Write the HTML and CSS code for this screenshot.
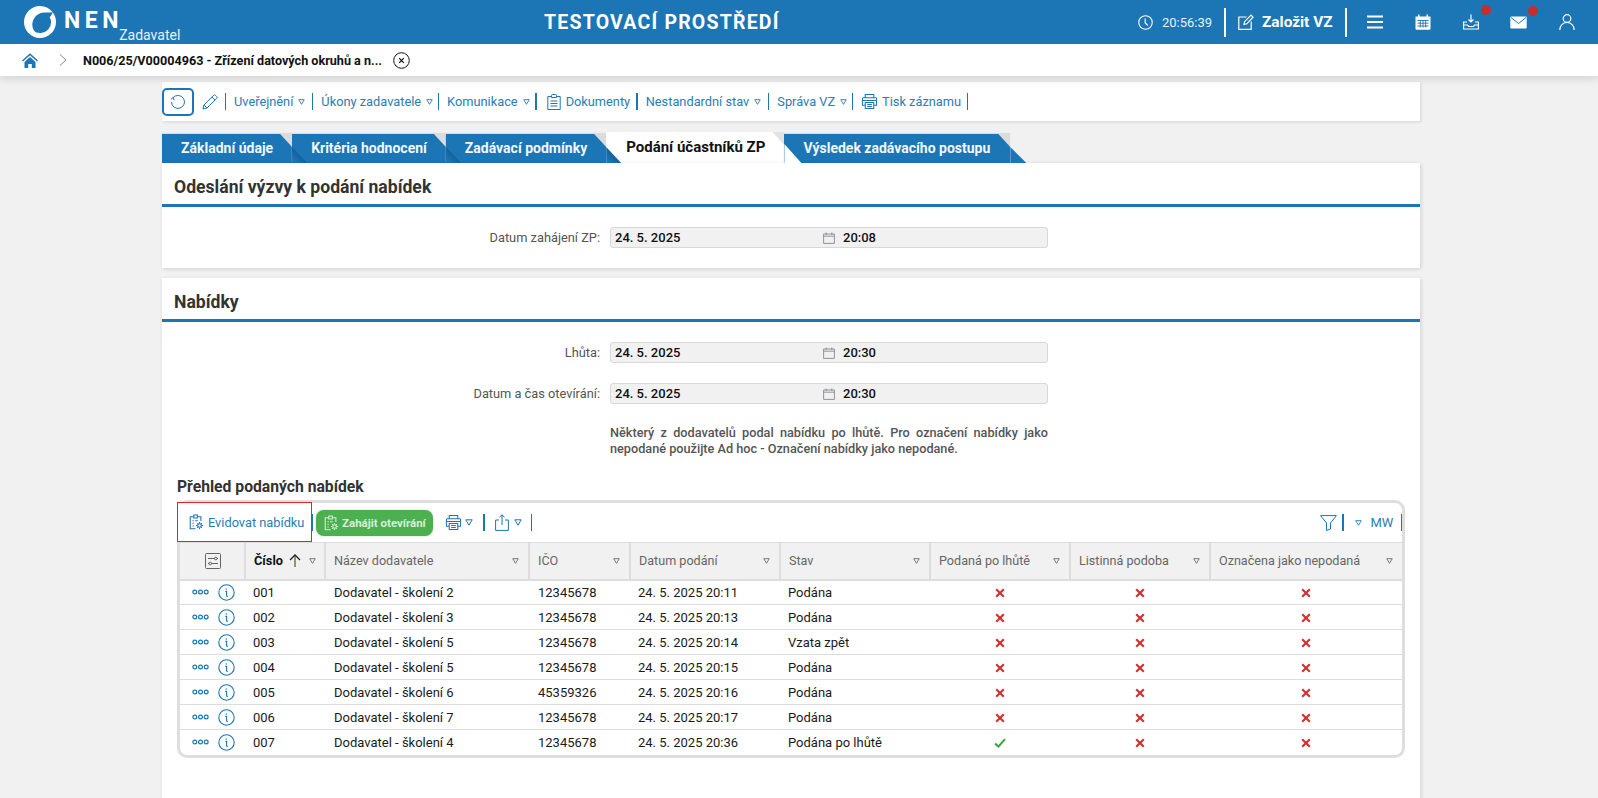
FILE: index.html
```html
<!DOCTYPE html>
<html lang="cs">
<head>
<meta charset="utf-8">
<title>NEN - Zadavatel</title>
<link rel="stylesheet" href="styles.css">
</head>
<body>
<svg class="defs" aria-hidden="true">
  <symbol id="tri" viewBox="0 0 8 7"><path d="M.8.8h6.4L4 6.2z" fill="none" stroke="currentColor" stroke-width="1"/></symbol>
  <symbol id="printer" viewBox="0 0 18 18" fill="none" stroke="currentColor" stroke-width="1.1"><path d="M4.5 5V1.5h9V5M4.5 13H1.5V6a1 1 0 0 1 1-1h13a1 1 0 0 1 1 1v7h-3"/><path d="M4.5 10h9v6.5h-9zM6.5 12.2h5M6.5 14.4h5M1.5 8h15"/></symbol>
  <symbol id="cal" viewBox="0 0 12 12" fill="none" stroke="currentColor" stroke-width=".9"><path d="M.6 2h10.8v9.4H.6zM.6 4.2h10.8M3.2.5v2.5M8.8.5v2.5"/></symbol>
  <symbol id="dots" viewBox="0 0 17 6" fill="none" stroke="currentColor" stroke-width="1.2"><circle cx="2.8" cy="3" r="1.9"/><circle cx="8.5" cy="3" r="1.9"/><circle cx="14.2" cy="3" r="1.9"/></symbol>
  <symbol id="info" viewBox="0 0 17 17" fill="none" stroke="currentColor" stroke-width="1.1"><circle cx="8.5" cy="8.5" r="7.7"/><path d="M7.3 7.4h1.3v4.2q0 .9 1.2.7" /><path d="M8.3 4.6v.9" stroke-width="1.4"/></symbol>
  <symbol id="cross" viewBox="0 0 10 10"><path d="M1.2 1.2l7.6 7.6M8.8 1.2L1.2 8.8" fill="none" stroke="currentColor" stroke-width="2.1"/></symbol>
  <symbol id="check" viewBox="0 0 12 10"><path d="M1 5.4l3.4 3.2L11 1.2" fill="none" stroke="currentColor" stroke-width="2"/></symbol>
  <symbol id="bid" viewBox="0 0 18 18" fill="none" stroke="currentColor" stroke-width="1.2"><path d="M6.5 3H2.5v13.5h6M11 3h3.5v5"/><path d="M6.5 1.2h4V4.5h-4zM5 7.5h1.5M8 7.5h3M5 10.5h1.5M5 13.5h1.5"/><circle cx="13" cy="13" r="2"/><path d="M13 9v1.6M13 15.4V17M9 13h1.6M15.4 13H17M10.3 10.3l1.1 1.1M14.6 14.6l1.1 1.1M15.7 10.3l-1.1 1.1M11.4 14.6l-1.1 1.1"/></symbol>
</svg>

<header class="topbar">
  <div class="brand">
    <svg class="logo" viewBox="0 0 32 32"><path d="M16 0a16 16 0 1 0 16 16c0-3.800-1.300-7.200-3.500-10-.4 2.400-1.400 3.800-3 5.300 1 1.400 1.600 3 1.600 4.700A11.100 11.100 0 1 1 13 5.300C8.500 6.600 5.500 10 4.500 14.500 3 21.500 8 29.300 16 28.200 10 26.800 7.300 21.500 8.700 15.800 10 10.500 14.700 6.700 20 6.500c3-.1 5.800.5 8.500-.5A16 16 0 0 0 16 0z" fill="#fff"/></svg>
    <span class="brand-name">NEN</span>
    <span class="brand-role">Zadavatel</span>
  </div>
  <div class="env-title">TESTOVACÍ PROSTŘEDÍ</div>
  <div class="top-actions">
    <svg class="ico15 clock" viewBox="0 0 16 16" fill="none" stroke="#fff" stroke-width="1.2"><circle cx="8" cy="8" r="7.200"/><path d="M7.600 3.800v4.400l2.800 3"/></svg>
    <span class="clock-time">20:56:39</span>
    <span class="top-sep first"></span>
    <svg class="ico16 edit" viewBox="0 0 16 16" fill="none" stroke="#fff" stroke-width="1.2"><path d="M8.500 3H.8v12.300h12.400V7.500"/><path d="M6 10.500l.6-2.800L13 1.200l2 2L8.800 9.800z"/></svg>
    <span class="create">Založit VZ</span>
    <span class="top-sep"></span>
    <svg class="ico16 menu" viewBox="0 0 16 14" fill="none" stroke="#fff" stroke-width="1.800"><path d="M0 1.500h16M0 7h16M0 12.500h16"/></svg>
    <svg class="ico16 calendar" viewBox="0 0 16 16"><path d="M.5 2.500h15V15a.8.8 0 0 1-.8.8H1.300a.8.800 0 0 1-.8-.8zM3 .5h1.500v3H3zM11.500.5H13v3h-1.500z" fill="#fff"/><path d="M2.500 6.500h11M2.500 9.200h11M2.500 12h11M5.300 6v7.500M8 6v7.500M10.700 6v7.500" stroke="#1c75b4" fill="none" stroke-width=".9"/></svg>
    <span class="with-badge download">
      <svg class="ico16" viewBox="0 0 16 16" fill="none" stroke="#fff" stroke-width="1.200"><path d="M8 .5v7M5.500 5.500L8 8l2.500-2.500"/><path d="M4 8H.6v7h14.800V8H12M.6 11h4l1 1.500h5l1-1.500h3.800" /></svg>
      <span class="badge"></span>
    </span>
    <span class="with-badge mail">
      <svg class="ico17" viewBox="0 0 17 13"><rect x=".3" y=".5" width="16.400" height="12" rx="1.200" fill="#fff"/><path d="M1 1.500l7.500 6 7.500-6" fill="none" stroke="#1c75b4" stroke-width="1"/></svg>
      <span class="badge"></span>
    </span>
    <svg class="ico16 user" viewBox="0 0 16 16" fill="none" stroke="#fff" stroke-width="1.200"><circle cx="8" cy="4.500" r="3.800"/><path d="M.8 16c0-4.500 3-7.500 7.200-7.500s7.200 3 7.200 7.500"/></svg>
  </div>
</header>

<nav class="crumbs">
  <svg class="home" viewBox="0 0 16 15"><path d="M8 .2L0 7.500l1 1L8 2.300l7 6.200 1-1z" fill="#1c75b4"/><path d="M2.500 9L8 4l5.500 5v6H9.800v-4H6.200v4H2.500z" fill="#1c75b4"/></svg>
  <svg class="chev" viewBox="0 0 8 12"><path d="M1 .5L7 6l-6 5.500" fill="none" stroke="#777" stroke-width=".9"/></svg>
  <span class="crumb-text">N006/25/V00004963 - Zřízení datových okruhů a n...</span>
  <svg class="crumb-close" viewBox="0 0 17 17" fill="none" stroke="#111"><circle cx="8.500" cy="8.500" r="7.800" stroke-width="1"/><path d="M6.200 6.200l4.600 4.600M10.800 6.200l-4.600 4.600" stroke-width="1.200"/></svg>
</nav>

<main class="page">
  <div class="toolbar">
    <button class="refresh" type="button"><svg viewBox="0 0 16 16" fill="none" stroke="#1c75b4" stroke-width="1"><path d="M3 3.800A6.500 6.500 0 1 1 1.500 8"/><path d="M.8 5.500L3 3.600l1.200 2.600" /></svg></button>
    <svg class="pencil" viewBox="0 0 16 16" fill="none" stroke="#1c75b4" stroke-width="1"><path d="M1 15l.9-4L11.500 1.400a1.500 1.500 0 0 1 2.100 0l1 1a1.500 1.500 0 0 1 0 2.100L5 14z"/><path d="M2 11l3 3M10 3l3 3"/></svg>
    <span class="tb-sep"></span>
    <a class="tb-item">Uveřejnění <svg class="tri"><use href="#tri"/></svg></a><span class="tb-sep"></span>
    <a class="tb-item tight-2">Úkony zadavatele <svg class="tri"><use href="#tri"/></svg></a><span class="tb-sep"></span>
    <a class="tb-item tight-1">Komunikace <svg class="tri"><use href="#tri"/></svg></a><span class="tb-sep"></span>
    <a class="tb-item tight-2 tb-doc"><svg class="doc-ico" viewBox="0 0 14 16" fill="none" stroke="#1c75b4" stroke-width="1"><path d="M4.500 2.500H.8v13h12.400v-13H9.500"/><path d="M4.500 1.500q0-1 1-1h3q1 0 1 1v2h-5zM3.500 7h7M3.500 9.500h7M3.500 12h7"/></svg>Dokumenty</a><span class="tb-sep"></span>
    <a class="tb-item">Nestandardní stav <svg class="tri"><use href="#tri"/></svg></a><span class="tb-sep"></span>
    <a class="tb-item tight-2">Správa VZ <svg class="tri"><use href="#tri"/></svg></a><span class="tb-sep"></span>
    <a class="tb-item tight-1"><svg class="print-ico"><use href="#printer"/></svg>Tisk záznamu</a><span class="tb-sep"></span>
  </div>

  <div class="tabs">
    <div class="tab">Základní údaje</div>
    <div class="tab">Kritéria hodnocení</div>
    <div class="tab">Zadávací podmínky</div>
    <div class="tab active">Podání účastníků ZP</div>
    <div class="tab last">Výsledek zadávacího postupu</div>
  </div>

  <section class="panel panel-first">
    <h2 class="panel-title">Odeslání výzvy k podání nabídek</h2>
    <div class="field first-field">
      <label class="field-label">Datum zahájení ZP:</label>
      <div class="dt"><span class="dt-date">24. 5. 2025</span><svg class="cal"><use href="#cal"/></svg><span>20:08</span></div>
    </div>
  </section>

  <section class="panel panel-second">
    <h2 class="panel-title">Nabídky</h2>
    <div class="field first-field">
      <label class="field-label">Lhůta:</label>
      <div class="dt"><span class="dt-date">24. 5. 2025</span><svg class="cal"><use href="#cal"/></svg><span>20:30</span></div>
    </div>
    <div class="field second-field">
      <label class="field-label">Datum a čas otevírání:</label>
      <div class="dt"><span class="dt-date">24. 5. 2025</span><svg class="cal"><use href="#cal"/></svg><span>20:30</span></div>
    </div>
    <p class="note">Některý z dodavatelů podal nabídku po lhůtě. Pro označení nabídky jako nepodané použijte Ad hoc - Označení nabídky jako nepodané.</p>
    <h3 class="overview">Přehled podaných nabídek</h3>

    <div class="grid-box">
      <div class="grid-tools">
        <div class="evid">
          <svg class="bid-ico"><use href="#bid"/></svg>
          <span class="evid-text">Evidovat nabídku</span>
          <span class="gt-sep evid-sep"></span>
        </div>
        <button class="open-btn" type="button"><svg class="bid-ico small"><use href="#bid"/></svg>Zahájit otevírání</button>
        <svg class="print-ico gt-print"><use href="#printer"/></svg>
        <svg class="tri gt-tri"><use href="#tri"/></svg>
        <span class="gt-sep s2"></span>
        <svg class="share" viewBox="0 0 14 17" fill="none" stroke="#1c75b4" stroke-width="1"><path d="M4 6H.6v10.400h12.800V6H10M7 11V.8M4.500 3.200L7 .8l2.500 2.400"/></svg>
        <svg class="tri share-tri"><use href="#tri"/></svg>
        <span class="gt-sep s3"></span>
        <span class="spacer"></span>
        <svg class="funnel" viewBox="0 0 17 16" fill="none" stroke="#1c75b4" stroke-width="1"><path d="M.6.600h15.800L10.500 8v6l-4 1.500V8z"/></svg>
        <span class="gt-sep s4"></span>
        <svg class="tri mw-tri"><use href="#tri"/></svg>
        <span class="mw">MW</span>
        <span class="gt-sep s5"></span>
      </div>
      <table class="grid">
        <colgroup><col class="c1"><col class="c2"><col class="c3"><col class="c4"><col class="c5"><col class="c6"><col class="c7"><col class="c8"><col class="c9"></colgroup>
        <thead>
          <tr>
            <th class="settings"><svg viewBox="0 0 16 16" fill="none" stroke="#555" stroke-width=".9"><rect x=".5" y=".5" width="15" height="15" rx="1"/><path d="M3 5.500h6.500M12 5.500h1M3 10.500h1M6.500 10.500H13"/><circle cx="10.800" cy="5.500" r="1.300"/><circle cx="5.200" cy="10.500" r="1.300"/></svg></th>
            <th class="sorted"><div class="th"><b>Číslo</b><svg class="arrow" viewBox="0 0 12 13" fill="none" stroke-width="1.300"><path d="M6 13V1" stroke="#7a5a20"/><path d="M1 6l5-5 5 5" stroke="#222"/></svg><svg class="tri th-tri"><use href="#tri"/></svg></div></th>
            <th><div class="th"><span>Název dodavatele</span><svg class="tri th-tri end"><use href="#tri"/></svg></div></th>
            <th><div class="th"><span>IČO</span><svg class="tri th-tri end"><use href="#tri"/></svg></div></th>
            <th><div class="th"><span>Datum podání</span><svg class="tri th-tri end"><use href="#tri"/></svg></div></th>
            <th><div class="th"><span>Stav</span><svg class="tri th-tri end"><use href="#tri"/></svg></div></th>
            <th><div class="th"><span>Podaná po lhůtě</span><svg class="tri th-tri end"><use href="#tri"/></svg></div></th>
            <th><div class="th"><span>Listinná podoba</span><svg class="tri th-tri end"><use href="#tri"/></svg></div></th>
            <th><div class="th"><span>Označena jako nepodaná</span><svg class="tri th-tri end"><use href="#tri"/></svg></div></th>
          </tr>
        </thead>
        <tbody>
          <tr><td class="act"><svg class="dots"><use href="#dots"/></svg><svg class="info"><use href="#info"/></svg></td><td>001</td><td>Dodavatel - školení 2</td><td>12345678</td><td>24. 5. 2025 20:11</td><td>Podána</td><td class="mark"><svg class="no"><use href="#cross"/></svg></td><td class="mark"><svg class="no"><use href="#cross"/></svg></td><td class="mark"><svg class="no"><use href="#cross"/></svg></td></tr>
          <tr><td class="act"><svg class="dots"><use href="#dots"/></svg><svg class="info"><use href="#info"/></svg></td><td>002</td><td>Dodavatel - školení 3</td><td>12345678</td><td>24. 5. 2025 20:13</td><td>Podána</td><td class="mark"><svg class="no"><use href="#cross"/></svg></td><td class="mark"><svg class="no"><use href="#cross"/></svg></td><td class="mark"><svg class="no"><use href="#cross"/></svg></td></tr>
          <tr><td class="act"><svg class="dots"><use href="#dots"/></svg><svg class="info"><use href="#info"/></svg></td><td>003</td><td>Dodavatel - školení 5</td><td>12345678</td><td>24. 5. 2025 20:14</td><td>Vzata zpět</td><td class="mark"><svg class="no"><use href="#cross"/></svg></td><td class="mark"><svg class="no"><use href="#cross"/></svg></td><td class="mark"><svg class="no"><use href="#cross"/></svg></td></tr>
          <tr><td class="act"><svg class="dots"><use href="#dots"/></svg><svg class="info"><use href="#info"/></svg></td><td>004</td><td>Dodavatel - školení 5</td><td>12345678</td><td>24. 5. 2025 20:15</td><td>Podána</td><td class="mark"><svg class="no"><use href="#cross"/></svg></td><td class="mark"><svg class="no"><use href="#cross"/></svg></td><td class="mark"><svg class="no"><use href="#cross"/></svg></td></tr>
          <tr><td class="act"><svg class="dots"><use href="#dots"/></svg><svg class="info"><use href="#info"/></svg></td><td>005</td><td>Dodavatel - školení 6</td><td>45359326</td><td>24. 5. 2025 20:16</td><td>Podána</td><td class="mark"><svg class="no"><use href="#cross"/></svg></td><td class="mark"><svg class="no"><use href="#cross"/></svg></td><td class="mark"><svg class="no"><use href="#cross"/></svg></td></tr>
          <tr><td class="act"><svg class="dots"><use href="#dots"/></svg><svg class="info"><use href="#info"/></svg></td><td>006</td><td>Dodavatel - školení 7</td><td>12345678</td><td>24. 5. 2025 20:17</td><td>Podána</td><td class="mark"><svg class="no"><use href="#cross"/></svg></td><td class="mark"><svg class="no"><use href="#cross"/></svg></td><td class="mark"><svg class="no"><use href="#cross"/></svg></td></tr>
          <tr><td class="act"><svg class="dots"><use href="#dots"/></svg><svg class="info"><use href="#info"/></svg></td><td>007</td><td>Dodavatel - školení 4</td><td>12345678</td><td>24. 5. 2025 20:36</td><td>Podána po lhůtě</td><td class="mark"><svg class="yes"><use href="#check"/></svg></td><td class="mark"><svg class="no"><use href="#cross"/></svg></td><td class="mark"><svg class="no"><use href="#cross"/></svg></td></tr>
        </tbody>
      </table>
    </div>
  </section>
</main>
</body>
</html>
```

FILE: styles.css
```css
* { box-sizing: border-box; }
html, body { margin: 0; height: 798px; overflow: hidden; }
body { background: #f1f1f1; font-family: Roboto, "Liberation Sans", sans-serif; font-size: 12.8px; color: #111; }
.defs { display: none; }
svg { display: block; flex: none; }

/* top bar */
.topbar { height: 44px; background: #1c75b4; color: #fff; display: flex; align-items: center; position: relative; z-index: 3; }
.brand { display: flex; align-items: flex-start; width: 544px; height: 44px; padding-left: 24px; flex: none; }
.logo { width: 32px; height: 32px; margin-top: 6px; }
.brand-name { font-size: 23px; font-weight: 700; letter-spacing: 4.6px; line-height: 26px; margin: 8px 0 0 8px; }
.brand-role { font-size: 14px; line-height: 16px; margin: 27px 0 0 -4px; color: #e8f1f8; }
.env-title { font-size: 19.5px; font-weight: 700; letter-spacing: 1.2px; width: 594px; flex: none; white-space: nowrap; }
.top-actions { display: flex; align-items: center; height: 44px; }
.ico15 { width: 15px; height: 15px; }
.ico16 { width: 16px; height: 16px; }
.ico17 { width: 17px; height: 13px; }
.clock-time { margin-left: 9px; color: #e8f1f8; width: 50px; font-size: 13px; }
.top-sep { width: 2px; height: 29px; background: #fff; margin-left: 11px; }
.top-sep.first { margin-left: 12px; }
.edit { margin-left: 12px; }
.create { margin-left: 8px; font-size: 15.4px; font-weight: 700; width: 72px; white-space: nowrap; }
.menu { margin-left: 20px; height: 14px; }
.calendar { margin-left: 32px; }
.with-badge { position: relative; display: block; }
.download { margin-left: 32px; }
.mail { margin-left: 31px; }
.badge { position: absolute; top: -9.5px; left: 18px; width: 10px; height: 10px; border-radius: 50%; background: #c62d2d; }
.user { margin-left: 32px; }

/* breadcrumb */
.crumbs { height: 32px; background: #fff; display: flex; align-items: center; box-shadow: 0 3px 8px rgba(0,0,0,.13); position: relative; z-index: 2; padding-left: 22px; }
.home { width: 16px; height: 15px; }
.chev { width: 8px; height: 12px; margin-left: 21px; }
.crumb-text { font-weight: 700; font-size: 12.6px; margin-left: 16px; width: 310px; white-space: nowrap; }
.crumb-close { width: 17px; height: 17px; }

/* page */
.page { margin: 6px 178px 0 162px; }
.toolbar { height: 39px; background: #fff; display: flex; align-items: center; box-shadow: 1px 1px 3px rgba(0,0,0,.12); }
.refresh { width: 32px; height: 28px; border: 2px solid #1c75b4; border-radius: 5px; background: #fff; padding: 0; display: flex; align-items: center; justify-content: center; }
.refresh svg { width: 16px; height: 16px; }
.pencil { width: 16px; height: 16px; margin-left: 8px; }
.tb-sep { width: 1.5px; height: 17px; background: #1c75b4; margin-left: 6.5px; flex: none; }
.tb-item { color: #2a7db8; margin-left: 8px; display: flex; align-items: center; white-space: nowrap; }
.tight-1 { margin-right: -1px; }
.tight-2 { margin-right: -2px; }
.tb-doc { margin-right: -.5px; }
.tri { width: 7px; height: 6px; color: #1c75b4; margin-left: 5px; }
.tb-item .tri { margin-left: 5px; }
.doc-ico { width: 14px; height: 16px; margin: 0 5px 0 2px; }
.print-ico { width: 17px; height: 17px; color: #1c75b4; margin-right: 4px; }

/* tabs */
.tabs { display: flex; align-items: flex-end; height: 31px; margin-top: 11px; }
.tab { height: 29px; background: #1c75b4; color: #f2f7fb; font-weight: 700; font-size: 14px; line-height: 29px; padding: 0 19px; position: relative; white-space: nowrap; box-shadow: 0 -1px 1px #dcdcdc; }
.tab::before { content: ""; position: absolute; top: 0; right: 0; width: 12px; height: 13px; background: #dcdcdc; clip-path: polygon(0 0, 100% 0, 100% 100%); }
.tab::after { content: ""; position: absolute; bottom: 0; left: 100%; width: 15px; height: 16px; background: linear-gradient(to bottom left, #15609a 50%, #1c75b4 85%); clip-path: polygon(0 0, 100% 100%, 0 100%); z-index: 1; }
.tab.active { height: 31px; background: #fff; color: #111; font-size: 15px; line-height: 31px; padding: 0 19px 0 20px; box-shadow: none; }
.tab.active::before { background: #e2e2e2; }
.tab.active::after { width: 17px; height: 19px; background: #fff; }
.tab.last { padding-right: 20px; }
.tab.last::after { background: #1c75b4; width: 16px; }

/* panels */
.panel { background: #fff; box-shadow: 1px 1px 4px rgba(0,0,0,.14); }
.panel-first { height: 105px; position: relative; }
.panel-second { margin-top: 10px; height: 530px; }
.panel-title { margin: 0; height: 44px; border-bottom: 3px solid #1c75b4; font-size: 17.6px; font-weight: 700; color: #333; padding: 0 0 0 12px; line-height: 49px; }
.field { display: flex; align-items: center; height: 21px; }
.first-field { margin-top: 20px; }
.second-field { margin-top: 20px; }
.field-label { width: 438px; text-align: right; color: #555; flex: none; }
.dt { margin-left: 10px; width: 438px; height: 21px; background: #f1f1f1; border: 1px solid #d8d8d8; border-radius: 3px; display: flex; align-items: center; padding-left: 4px; font-weight: 500; font-size: 13px; color: #111; }
.dt-date { width: 208px; }
.cal { width: 12px; height: 12px; color: #8c8494; margin-right: 8px; }
.note { margin: 21px 0 0 448px; width: 438px; font-size: 12.7px; line-height: 16px; font-weight: 500; color: #555; text-align: justify; }
.overview { margin: 20px 0 0 15px; font-size: 15.7px; font-weight: 700; color: #333; line-height: 20px; }

/* grid */
.grid-box { margin: 3px 0 0 15px; width: 1228px; height: 258px; border: 3px solid #dedede; border-radius: 10px; }
.grid-tools { height: 39px; display: flex; align-items: center; }
.evid { display: flex; align-items: center; width: 135px; height: 40px; margin: -1px 0 0 -3px; border: 1px solid #e3242b; color: #2a7db8; flex: none; padding-left: 10px; background: #fff; }
.evid-text { white-space: nowrap; }
.bid-ico { width: 16px; height: 16px; color: #1c75b4; margin-right: 4px; }
.gt-sep { width: 1.5px; height: 17px; background: #1c75b4; flex: none; }
.evid-sep { margin-left: 7px; }
.open-btn { margin-left: 4px; width: 117px; height: 26px; background: #4caf50; border: 0; border-radius: 8px; color: #d8efd9; font: 700 11.5px Roboto, sans-serif; display: flex; align-items: center; padding: 0 0 0 7px; white-space: nowrap; box-shadow: 0 0 2px rgba(76,175,80,.5); }
.bid-ico.small { width: 16px; height: 16px; color: #d8efd9; margin-right: 3px; }
.gt-print { margin: 0 0 0 12px; }
.gt-tri { margin-left: 3px; width: 8px; height: 7px; }
.s2 { margin-left: 10px; }
.share { width: 14px; height: 17px; margin-left: 10px; }
.share-tri { margin-left: 5px; width: 8px; height: 7px; }
.s3 { margin-left: 9px; }
.spacer { flex: 1; }
.funnel { width: 17px; height: 16px; }
.s4 { margin-left: 5px; }
.mw-tri { margin-left: 11px; }
.mw { color: #2a7db8; margin-left: 9px; font-size: 13px; width: 23px; }
.s5 { margin: 0 0 0 7px; }

.grid { border-collapse: collapse; table-layout: fixed; width: 1222px; }
.c1 { width: 65px; } .c2 { width: 80px; } .c3 { width: 204px; } .c4 { width: 101px; } .c5 { width: 150px; }
.c6 { width: 150px; } .c7 { width: 140px; } .c8 { width: 140px; } .c9 { width: 192px; }
.grid th { height: 37px; background: #f1f1f1; color: #666; font-weight: 400; font-size: 12.6px; text-align: left; padding: 0 9px 0 8px; border-right: 2px solid #ddd; border-top: 1px solid #ddd; border-bottom: 2px solid #ddd; }
.grid th:last-child { border-right: 0; }
.th { display: flex; align-items: center; }
.th b { color: #111; font-weight: 700; font-size: 12.8px; }
.arrow { width: 12px; height: 13px; margin-left: 6px; }
.th-tri { color: #666; margin-left: 8px; }
.th-tri.end { margin-left: auto; margin-right: 0; }
.settings svg { width: 16px; height: 16px; margin-left: 17px; }
.grid td { height: 25px; padding: 0 8px; border-bottom: 1px solid #ddd; white-space: nowrap; color: #1a1a1a; font-size: 13px; }
.grid td:nth-child(3) { padding-left: 9px; }
.grid td:nth-child(4) { padding-left: 9px; }
.grid tr:last-child td { border-bottom: 0; }
.grid td.act { padding: 0 0 0 12px; }
.act svg { display: inline-block; vertical-align: middle; }
.dots { width: 17px; height: 6px; color: #1c75b4; }
.info { width: 17px; height: 17px; color: #1c75b4; margin-left: 9px; }
.grid td.mark { text-align: center; }
.mark svg { display: inline-block; vertical-align: middle; }
.no { width: 10px; height: 10px; color: #d32f2f; }
.yes { width: 12px; height: 10px; color: #3aa53f; }
```
